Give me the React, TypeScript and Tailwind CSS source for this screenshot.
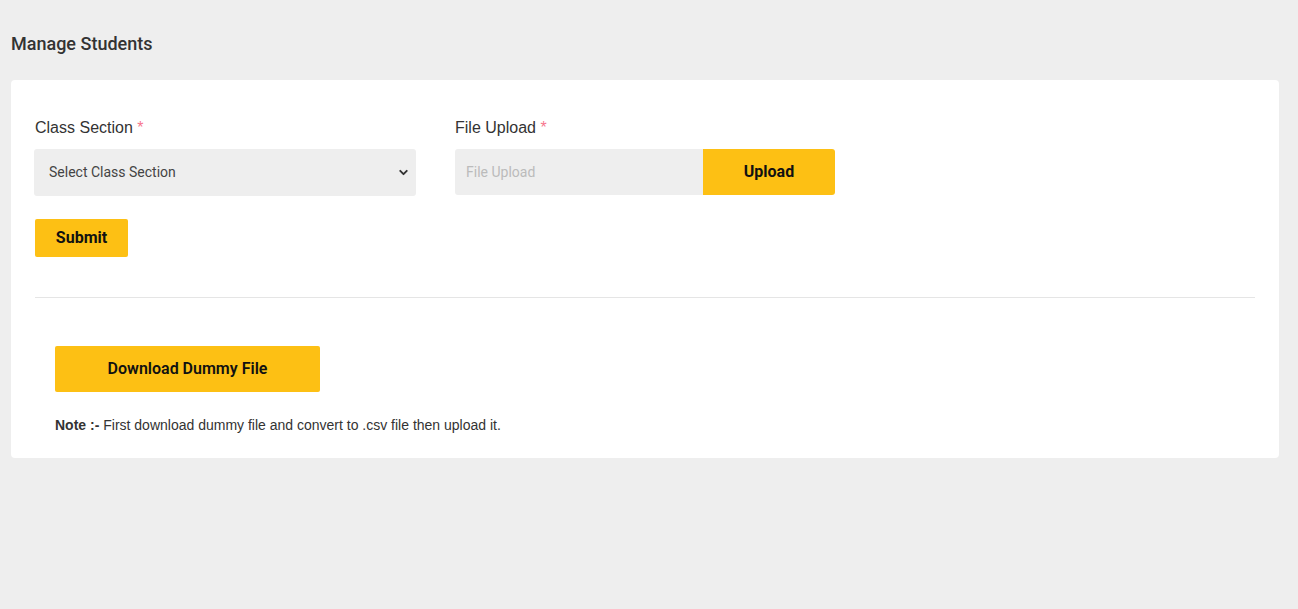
import { ChevronDown } from "lucide-react";

export default function App() {
  return (
    <div className="min-h-[609px] bg-[#eeeeee] px-[11px] pt-[33px] font-['Roboto',sans-serif]">
      <h1 className="text-[18px] font-medium text-[#333] leading-[22px]">Manage Students</h1>
      <div className="mt-[25px] w-[1268px] rounded-[4px] bg-white px-[24px] pt-[38px] pb-[24px]">
        <div className="flex gap-[38px]">
          <div className="w-[382px]">
            <label className="block font-['Liberation_Sans',Arial,sans-serif] text-[16px] leading-[20px] text-[#333]">
              Class Section <span className="text-[#f7768e]">*</span>
            </label>
            <div className="relative mt-[11px] ml-[-1px] flex h-[47px] w-[382px] items-center rounded-[3px] bg-[#eeeeee] pl-[15px] text-[14px] text-[#444]">
              Select Class Section
              <ChevronDown className="absolute right-[6px] top-[17px] h-[13px] w-[13px] text-[#333]" strokeWidth={3.5} />
            </div>
          </div>
          <div className="w-[380px]">
            <label className="block font-['Liberation_Sans',Arial,sans-serif] text-[16px] leading-[20px] text-[#333]">
              File Upload <span className="text-[#f7768e]">*</span>
            </label>
            <div className="mt-[11px] flex h-[46px]">
              <div className="flex w-[248px] items-center rounded-l-[3px] bg-[#eeeeee] pl-[11px] text-[14px] text-[#bbb]">
                File Upload
              </div>
              <button className="w-[132px] rounded-r-[3px] bg-[#fdc014] text-[16px] font-bold text-[#111]">Upload</button>
            </div>
          </div>
        </div>
        <button className="mt-[23px] h-[38px] w-[93px] rounded-[2px] bg-[#fdc014] text-[16px] font-bold text-[#111]">Submit</button>
        <div className="mt-[40px] h-px bg-[#e5e5e5]" />
        <div className="px-[20px] pt-[48px]">
          <button className="h-[46px] w-[265px] rounded-[2px] bg-[#fdc014] text-[16px] font-semibold text-[#111]">Download Dummy File</button>
          <p className="mt-[24px] font-['Liberation_Sans',Arial,sans-serif] text-[14px] leading-[18px] text-[#333]">
            <span className="font-bold">Note :-</span> First download dummy file and convert to .csv file then upload it.
          </p>
        </div>
      </div>
    </div>
  );
}
